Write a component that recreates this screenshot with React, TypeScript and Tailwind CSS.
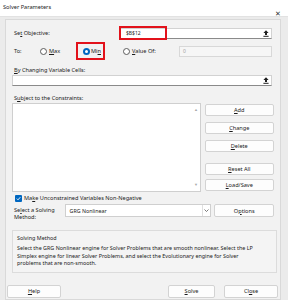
import React from "react";
import clsx from "clsx";

function U({ children }: { children: React.ReactNode }) {
  return <span className="underline decoration-[0.5px] underline-offset-[1px]">{children}</span>;
}

function RefIcon() {
  return (
    <svg width="6" height="7" viewBox="0 0 6 7">
      <path d="M3 0.3 L5.6 3 H4 V5 H2 V3 H0.4 Z" fill="#1f1f1f" />
      <rect x="0.4" y="5.8" width="5.2" height="1" fill="#1f1f1f" />
    </svg>
  );
}

function Radio({ checked }: { checked?: boolean }) {
  return checked ? (
    <span className="w-[7px] h-[7px] rounded-full bg-[#0067c0] flex items-center justify-center shrink-0">
      <span className="w-[3px] h-[3px] rounded-full bg-white" />
    </span>
  ) : (
    <span className="w-[7px] h-[7px] rounded-full border border-[#5c5c5c] bg-white shrink-0" />
  );
}

function Btn({ children, className }: { children: React.ReactNode; className?: string }) {
  return (
    <div
      className={clsx(
        "h-[12px] bg-[#fdfdfd] border border-[#d3d3d3] rounded-[2px] flex items-center justify-center",
        className,
      )}
    >
      {children}
    </div>
  );
}

function RefInput({ className }: { className?: string }) {
  return (
    <div className={clsx("h-[11px] bg-white border border-[#d2d2d2] border-b-[#8a8a8a] flex items-center justify-end pr-[2px]", className)}>
      <RefIcon />
    </div>
  );
}

export default function App() {
  return (
    <div
      className="w-[288px] h-[300px] bg-[#ebebeb] text-[#1b1b1b] text-[5.6px] leading-[8px] flex flex-col overflow-hidden"
      style={{ fontFamily: '"Noto Sans", "Open Sans", sans-serif' }}
    >
      {/* title bar */}
      <div className="h-[17px] bg-white flex justify-between border-b border-[#e2e2e2] shrink-0">
        <span className="pl-[3px] pt-[3px]">Solver Parameters</span>
        <span className="pr-[7px] pt-[10px] text-[7px] leading-[8px] text-[#333]">✕</span>
      </div>

      {/* body */}
      <div className="ml-[5px] mt-[2px] w-[276px] flex-1 border border-[#d9d9d9] bg-[#f2f2f2] flex flex-col">
        <div className="px-[6px] flex flex-col">
          {/* set objective */}
          <div className="mt-[6px] h-[14px] flex items-center">
            <span className="w-[107px] pl-[2px]">
              Se<U>t</U> Objective:
            </span>
            <div className="relative">
              <RefInput className="w-[153px]" />
              <div className="absolute left-0 -top-[2px] w-[48px] h-[14px] border-2 border-[#e2121b] flex items-center pl-[5px]">
                <span className="text-[5px]">$B$12</span>
              </div>
            </div>
          </div>

          {/* to */}
          <div className="mt-[2px] h-[18px] flex items-center">
            <span className="w-[28px] pl-[2px]">To:</span>
            <div className="w-[36px] flex items-center gap-[2px]">
              <Radio />
              <span>
                <U>M</U>ax
              </span>
            </div>
            <div className="w-[29px] h-[18px] border-2 border-[#e2121b] flex items-center pl-[5px] gap-[1px]">
              <Radio checked />
              <span>
                Mi<U>n</U>
              </span>
            </div>
            <div className="ml-[18px] w-[56px] flex items-center gap-[2px]">
              <Radio />
              <span>
                <U>V</U>alue Of:
              </span>
            </div>
            <div className="w-[93px] h-[11px] bg-[#f6f6f6] border border-[#d8d8d8] flex items-center pl-[3px] text-[#a0a0a0] text-[5px]">
              0
            </div>
          </div>

          {/* changing cells */}
          <div className="mt-[6px] h-[8px] pl-[2px] flex items-center">
            <span>
              <U>B</U>y Changing Variable Cells:
            </span>
          </div>
          <RefInput className="mt-[1px] w-[260px]" />

          {/* constraints */}
          <div className="mt-[8px] h-[8px] pl-[2px] flex items-center">
            <span>
              S<U>u</U>bject to the Constraints:
            </span>
          </div>
          <div className="mt-[1px] flex gap-[4px]">
            <div className="w-[190px] h-[89px] bg-white border border-[#cfcfcf] flex justify-end">
              <div className="w-[7px] flex flex-col justify-between items-center py-[4px] text-[#a8a8a8] text-[4px] leading-[4px]">
                <span>▲</span>
                <span>▼</span>
              </div>
            </div>
            <div className="w-[70px] flex flex-col pt-[1px]">
              <Btn>
                <U>A</U>dd
              </Btn>
              <Btn className="mt-[6px]">
                <U>C</U>hange
              </Btn>
              <Btn className="mt-[6px]">
                <U>D</U>elete
              </Btn>
              <Btn className="mt-[11px]">
                <U>R</U>eset All
              </Btn>
              <Btn className="mt-[4px]">
                <U>L</U>oad/Save
              </Btn>
            </div>
          </div>

          {/* checkbox */}
          <div className="mt-[2px] h-[8px] flex items-center pl-[3px] gap-[2px]">
            <span className="w-[7px] h-[7px] rounded-[1px] bg-[#0067c0] flex items-center justify-center">
              <svg width="5" height="5" viewBox="0 0 5 5">
                <path d="M0.8 2.6 L2 3.8 L4.3 1.2" stroke="white" strokeWidth="0.9" fill="none" />
              </svg>
            </span>
            <span>
              Ma<U>k</U>e Unconstrained Variables Non-Negative
            </span>
          </div>

          {/* method */}
          <div className="mt-[2px] h-[16px] flex items-start">
            <span className="w-[53px] pl-[2px] pt-[3px] leading-[7px]">
              Se<U>l</U>ect a Solving
              <br />
              Method:
            </span>
            <div className="w-[148px] h-[13px] bg-white border border-[#cfcfcf] flex items-center justify-between pl-[4px]">
              <span className="text-[5.3px]">GRG Nonlinear</span>
              <span className="w-[8px] h-[11px] border-l border-[#e0e0e0] flex items-center justify-center">
                <svg width="5" height="3" viewBox="0 0 5 3">
                  <path d="M0.5 0.5 L2.5 2.5 L4.5 0.5" stroke="#444" strokeWidth="0.7" fill="none" />
                </svg>
              </span>
            </div>
            <Btn className="ml-[3px] w-[60px] h-[13px]">
              O<U>p</U>tions
            </Btn>
          </div>

          {/* solving method group */}
          <div className="mt-[10px] w-[265px] border border-[#dcdcdc] bg-[#f4f4f4] pl-[4px] pt-[3px] pb-[4px] text-[5.4px]">
            <div className="h-[8px] leading-[8px]">Solving Method</div>
            <p className="mt-[3px] leading-[7.5px] whitespace-nowrap">
              Select the GRG Nonlinear engine for Solver Problems that are smooth nonlinear. Select the LP
              <br />
              Simplex engine for linear Solver Problems, and select the Evolutionary engine for Solver
              <br />
              problems that are non-smooth.
            </p>
          </div>
        </div>

        {/* bottom buttons */}
        <div className="mt-[12px] pl-[1px] flex">
          <Btn className="w-[54px] h-[13px]">
            <U>H</U>elp
          </Btn>
          <Btn className="ml-[107px] w-[47px] h-[13px] border-[#6e9fd0]">
            <U>S</U>olve
          </Btn>
          <Btn className="ml-[9px] w-[54px] h-[13px]">
            Cl<U>o</U>se
          </Btn>
        </div>
      </div>
    </div>
  );
}
